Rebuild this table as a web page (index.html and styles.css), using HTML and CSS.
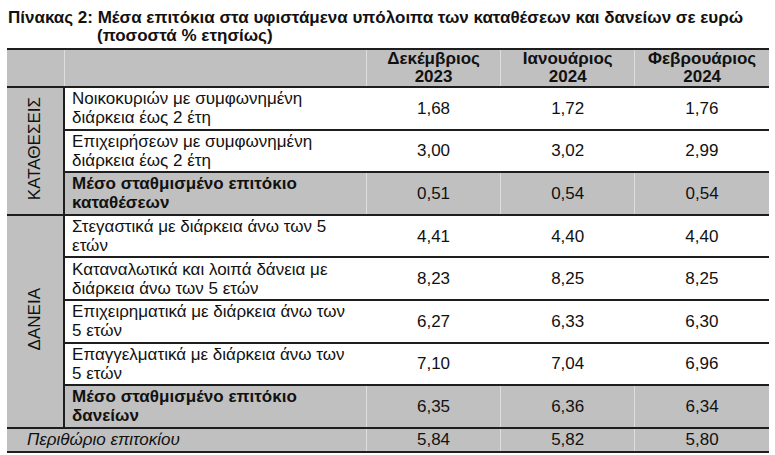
FILE: index.html
```html
<!DOCTYPE html>
<html lang="el">
<head>
<meta charset="utf-8">
<link rel="stylesheet" href="styles.css">
</head>
<body>
<div class="page">
  <h1 class="title">Πίνακας 2: Μέσα επιτόκια στα υφιστάμενα υπόλοιπα των καταθέσεων και δανείων σε ευρώ<br><span class="sub">(ποσοστά % ετησίως)</span></h1>
  <table class="rates">
    <colgroup>
      <col class="c-cat"><col class="c-desc"><col class="c-val"><col class="c-val"><col class="c-val">
    </colgroup>
    <thead>
      <tr class="head">
        <th class="h-cat"></th>
        <th class="h-desc"></th>
        <th class="val">Δεκέμβριος<br>2023</th>
        <th class="val">Ιανουάριος<br>2024</th>
        <th class="val">Φεβρουάριος<br>2024</th>
      </tr>
    </thead>
    <tbody>
      <tr>
        <td class="cat" rowspan="3"><span class="vlabel">ΚΑΤΑΘΕΣΕΙΣ</span></td>
        <td class="desc">Νοικοκυριών με συμφωνημένη<br>διάρκεια έως 2 έτη</td>
        <td class="val">1,68</td><td class="val">1,72</td><td class="val">1,76</td>
      </tr>
      <tr>
        <td class="desc">Επιχειρήσεων με συμφωνημένη<br>διάρκεια έως 2 έτη</td>
        <td class="val">3,00</td><td class="val">3,02</td><td class="val">2,99</td>
      </tr>
      <tr class="avg">
        <td class="desc">Μέσο σταθμισμένο επιτόκιο<br>καταθέσεων</td>
        <td class="val">0,51</td><td class="val">0,54</td><td class="val">0,54</td>
      </tr>
      <tr>
        <td class="cat" rowspan="5"><span class="vlabel">ΔΑΝΕΙΑ</span></td>
        <td class="desc">Στεγαστικά με διάρκεια άνω των 5<br>ετών</td>
        <td class="val">4,41</td><td class="val">4,40</td><td class="val">4,40</td>
      </tr>
      <tr>
        <td class="desc">Καταναλωτικά και λοιπά δάνεια με<br>διάρκεια άνω των 5 ετών</td>
        <td class="val">8,23</td><td class="val">8,25</td><td class="val">8,25</td>
      </tr>
      <tr>
        <td class="desc">Επιχειρηματικά με διάρκεια άνω των<br>5 ετών</td>
        <td class="val">6,27</td><td class="val">6,33</td><td class="val">6,30</td>
      </tr>
      <tr>
        <td class="desc">Επαγγελματικά με διάρκεια άνω των<br>5 ετών</td>
        <td class="val">7,10</td><td class="val">7,04</td><td class="val">6,96</td>
      </tr>
      <tr class="avg">
        <td class="desc">Μέσο σταθμισμένο επιτόκιο<br>δανείων</td>
        <td class="val">6,35</td><td class="val">6,36</td><td class="val">6,34</td>
      </tr>
      <tr class="margin">
        <td class="m-desc" colspan="2">Περιθώριο επιτοκίου</td>
        <td class="val">5,84</td><td class="val">5,82</td><td class="val">5,80</td>
      </tr>
    </tbody>
  </table>
</div>
</body>
</html>
```
FILE: styles.css
```css
html, body {
  margin: 0;
  padding: 0;
  background: #ffffff;
}
body {
  font-family: "Liberation Sans", Arial, sans-serif;
  color: #111111;
}
.page {
  padding: 9px 6px 0 7px;
}
.title {
  margin: 0 0 3px 1px;
  font-size: 17px;
  font-weight: bold;
  line-height: 18px;
  color: #111111;
}
.title .sub {
  display: inline-block;
  padding-left: 89px;
}
.rates {
  border-collapse: collapse;
  table-layout: fixed;
  width: 762px;
  font-size: 17px;
  line-height: 19px;
}
.c-cat { width: 57px; }
.c-desc { width: 302px; }
.c-val { width: 134px; }

.rates th, .rates td {
  padding: 1px 0;
  vertical-align: middle;
}
.rates .head th {
  padding: 0;
  background: #c0c0c0;
  border-top: 2px solid #1e1e1e;
  border-bottom: 2px solid #1e1e1e;
  height: 36px;
  font-weight: bold;
  text-align: center;
  line-height: 18px;
}
.head th + th {
  border-left: 1px solid #dedede;
}
.cat {
  background: #c0c0c0;
  border-right: 2px solid #1e1e1e;
  border-bottom: 2px solid #1e1e1e;
  text-align: center;
}
.vlabel {
  display: inline-block;
  writing-mode: vertical-rl;
  transform: rotate(180deg);
  font-size: 17px;
  line-height: 18px;
}
.desc {
  padding-left: 7px !important;
  height: 38.6px;
  text-align: left;
  border-bottom: 2px solid #1e1e1e;
}
.val {
  text-align: center;
}
tbody td.val {
  border-bottom: 2px solid #1e1e1e;
}
.avg td {
  background: #c0c0c0;
}
.avg .desc {
  font-weight: bold;
}
.avg td.val, .margin td.val {
  border-left: 1px solid #dedede;
}
.margin td {
  background: #c0c0c0;
  height: 20px;
  border-bottom: 2px solid #1e1e1e;
}
.m-desc {
  font-style: italic;
  padding-left: 20px !important;
}
```
